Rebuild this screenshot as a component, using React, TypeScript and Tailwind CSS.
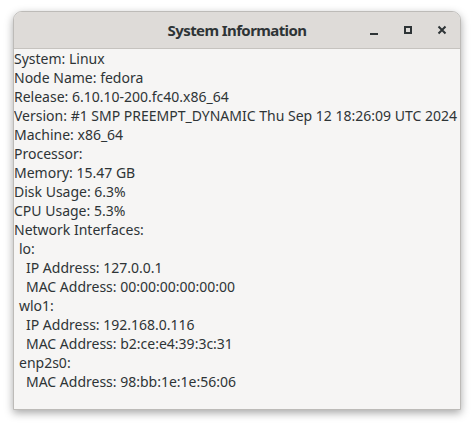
const lines: [string, number][] = [
  ["System: Linux", 0],
  ["Node Name: fedora", 0],
  ["Release: 6.10.10-200.fc40.x86_64", 0],
  ["Version: #1 SMP PREEMPT_DYNAMIC Thu Sep 12 18:26:09 UTC 2024", 0],
  ["Machine: x86_64", 0],
  ["Processor: ", 0],
  ["Memory: 15.47 GB", 0],
  ["Disk Usage: 6.3%", 0],
  ["CPU Usage: 5.3%", 0],
  ["Network Interfaces:", 0],
  ["lo:", 1],
  ["IP Address: 127.0.0.1", 2],
  ["MAC Address: 00:00:00:00:00:00", 2],
  ["wlo1:", 1],
  ["IP Address: 192.168.0.116", 2],
  ["MAC Address: b2:ce:e4:39:3c:31", 2],
  ["enp2s0:", 1],
  ["MAC Address: 98:bb:1e:1e:56:06", 2],
];

export default function App() {
  return (
    <div className="w-[474px] h-[427px] bg-white pl-[13px] pt-[11px] font-['Noto_Sans',sans-serif]">
      <div className="w-[448px] h-[399px] flex flex-col rounded-t-[9px] border border-[#bdbbb8] bg-[#f6f5f4] shadow-[0_3px_9px_rgba(0,0,0,0.35)] overflow-hidden">
        {/* title bar */}
        <div className="h-[37px] shrink-0 relative flex items-center justify-center bg-[#dedbd8] border-b border-[#c6c3bf]">
          <span className="text-[15px] font-bold text-[#2e3436] tracking-[-0.6px]">System Information</span>
          <div className="absolute right-[10px] top-0 h-full flex items-center gap-[18px] text-[#2e3436]">
            <svg width="16" height="16" viewBox="0 0 16 16">
              <rect x="4" y="11" width="8" height="2" fill="currentColor" />
            </svg>
            <svg width="16" height="16" viewBox="0 0 16 16">
              <rect x="5" y="5" width="6" height="6" fill="none" stroke="currentColor" strokeWidth="2" />
            </svg>
            <svg width="16" height="16" viewBox="0 0 16 16">
              <path d="M4.5 4.5 L11.5 11.5 M11.5 4.5 L4.5 11.5" stroke="currentColor" strokeWidth="2" />
            </svg>
          </div>
        </div>
        {/* body */}
        <div className="flex-1 text-[14px] leading-[19px] text-[#2e3436] whitespace-pre">
          {lines.map(([l, lvl], i) => (
            <div key={i} className={lvl === 2 ? "pl-[12px]" : lvl === 1 ? "pl-[5px]" : ""}>
              {l}
            </div>
          ))}
        </div>
      </div>
    </div>
  );
}
